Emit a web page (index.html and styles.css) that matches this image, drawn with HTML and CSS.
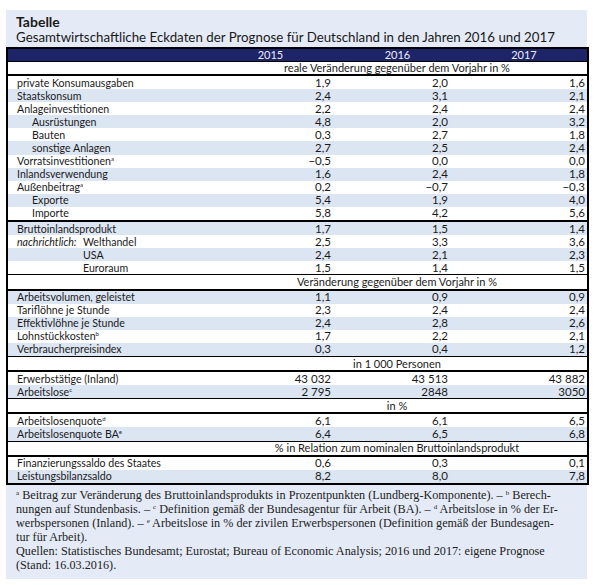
FILE: index.html
```html
<!DOCTYPE html>
<html lang="de">
<head>
<meta charset="utf-8">
<title>Tabelle</title>
<link rel="stylesheet" href="styles.css">
</head>
<body>
<div class="panel">
  <div class="cap">Tabelle</div>
  <div class="sub">Gesamtwirtschaftliche Eckdaten der Prognose für Deutschland in den Jahren 2016 und 2017</div>
  <table class="data">
    <colgroup><col class="c0"><col class="c1"><col class="c2"><col class="c3"></colgroup>
    <thead>
      <tr class="head"><th></th><th>2015</th><th>2016</th><th>2017</th></tr>
    </thead>
    <tbody>
      <tr class="sec first"><td></td><td colspan="3">reale Veränderung gegenüber dem Vorjahr in %</td></tr>
      <tr><td>private Konsumausgaben</td><td>1,9</td><td>2,0</td><td>1,6</td></tr>
      <tr class="alt"><td>Staatskonsum</td><td>2,4</td><td>3,1</td><td>2,1</td></tr>
      <tr><td>Anlageinvestitionen</td><td>2,2</td><td>2,4</td><td>2,4</td></tr>
      <tr class="alt"><td class="ind">Ausrüstungen</td><td>4,8</td><td>2,0</td><td>3,2</td></tr>
      <tr><td class="ind">Bauten</td><td>0,3</td><td>2,7</td><td>1,8</td></tr>
      <tr class="alt"><td class="ind">sonstige Anlagen</td><td>2,7</td><td>2,5</td><td>2,4</td></tr>
      <tr><td>Vorratsinvestitionen<sup>a</sup></td><td>−0,5</td><td>0,0</td><td>0,0</td></tr>
      <tr class="alt"><td>Inlandsverwendung</td><td>1,6</td><td>2,4</td><td>1,8</td></tr>
      <tr><td>Außenbeitrag<sup>a</sup></td><td>0,2</td><td>−0,7</td><td>−0,3</td></tr>
      <tr class="alt"><td class="ind">Exporte</td><td>5,4</td><td>1,9</td><td>4,0</td></tr>
      <tr><td class="ind">Importe</td><td>5,8</td><td>4,2</td><td>5,6</td></tr>
      <tr class="alt topline"><td>Bruttoinlandsprodukt</td><td>1,7</td><td>1,5</td><td>1,4</td></tr>
      <tr><td><span class="nach">nachrichtlich:</span>Welthandel</td><td>2,5</td><td>3,3</td><td>3,6</td></tr>
      <tr class="alt"><td class="far">USA</td><td>2,4</td><td>2,1</td><td>2,3</td></tr>
      <tr><td class="far">Euroraum</td><td>1,5</td><td>1,4</td><td>1,5</td></tr>
      <tr class="sec"><td></td><td colspan="3">Veränderung gegenüber dem Vorjahr in %</td></tr>
      <tr class="alt"><td>Arbeitsvolumen, geleistet</td><td>1,1</td><td>0,9</td><td>0,9</td></tr>
      <tr><td>Tariflöhne je Stunde</td><td>2,3</td><td>2,4</td><td>2,4</td></tr>
      <tr class="alt"><td>Effektivlöhne je Stunde</td><td>2,4</td><td>2,8</td><td>2,6</td></tr>
      <tr><td>Lohnstückkosten<sup>b</sup></td><td>1,7</td><td>2,2</td><td>2,1</td></tr>
      <tr class="alt"><td>Verbraucherpreisindex</td><td>0,3</td><td>0,4</td><td>1,2</td></tr>
      <tr class="sec"><td></td><td colspan="3">in 1 000 Personen</td></tr>
      <tr><td>Erwerbstätige (Inland)</td><td>43 032</td><td>43 513</td><td>43 882</td></tr>
      <tr class="alt"><td>Arbeitslose<sup>c</sup></td><td>2 795</td><td>2848</td><td>3050</td></tr>
      <tr class="sec"><td></td><td colspan="3">in %</td></tr>
      <tr><td>Arbeitslosenquote<sup>d</sup></td><td>6,1</td><td>6,1</td><td>6,5</td></tr>
      <tr class="alt"><td>Arbeitslosenquote BA<sup>e</sup></td><td>6,4</td><td>6,5</td><td>6,8</td></tr>
      <tr class="sec"><td></td><td colspan="3">% in Relation zum nominalen Bruttoinlandsprodukt</td></tr>
      <tr><td>Finanzierungssaldo des Staates</td><td>0,6</td><td>0,3</td><td>0,1</td></tr>
      <tr class="alt"><td>Leistungsbilanzsaldo</td><td>8,2</td><td>8,0</td><td>7,8</td></tr>
    </tbody>
  </table>
  <p class="notes"><sup>a</sup> Beitrag zur Veränderung des Bruttoinlandsprodukts in Prozentpunkten (Lundberg-Komponente). – <sup>b</sup> Berech-<br>nungen auf Stundenbasis. – <sup>c</sup> Definition gemäß der Bundesagentur für Arbeit (BA). – <sup>d</sup> Arbeitslose in % der Er-<br>werbspersonen (Inland). – <sup>e</sup> Arbeitslose in % der zivilen Erwerbspersonen (Definition gemäß der Bundesagen-<br>tur für Arbeit).<br>Quellen: Statistisches Bundesamt; Eurostat; Bureau of Economic Analysis; 2016 und 2017: eigene Prognose<br>(Stand: 16.03.2016).</p>
</div>
</body>
</html>
```

FILE: styles.css
```css
html, body {
  margin: 0;
  padding: 0;
  background: #ffffff;
}

.panel {
  margin: 10px 0 0 6px;
  width: 581px;
  background: #e4ebf6;
  padding: 4px 0 7px 0;
  font-family: Lato, "Liberation Sans", sans-serif;
  color: #1a1a1a;
}

.cap {
  font-weight: bold;
  font-size: 14px;
  line-height: 15px;
  padding-left: 10px;
}

.sub {
  font-size: 13.3px;
  line-height: 17px;
  padding-left: 10px;
  white-space: nowrap;
}

.data {
  width: 581px;
  border-collapse: collapse;
  table-layout: fixed;
  margin-top: 1px;
  border: 2px solid #000;
  font-size: 10.6px;
  background: #fff;
}

.c0 { width: 200px; }
.c1 { width: 127px; }
.c2 { width: 127px; }
.c3 { width: 127px; }

.data th,
.data td {
  padding: 0;
  height: 13.1px;
  line-height: 12px;
  white-space: nowrap;
}

.head th {
  background: #1e2468;
  color: #eceef6;
  font-weight: normal;
  font-size: 11px;
  text-align: center;
  height: 12px;
  border-bottom: 1px solid #000;
}

.data td:first-child {
  padding-left: 9px;
  text-align: left;
}

.data td:nth-child(2),
.data td:nth-child(3),
.data td:nth-child(4) {
  font-size: 11.5px;
}

.data td:nth-child(2) { text-align: right; padding-right: 3px; }
.data td:nth-child(3) { text-align: right; padding-right: 13px; }
.data td:nth-child(4) { text-align: right; padding-right: 2px; }

.data .sec td {
  background: #fff;
  border-top: 1px solid #000;
  border-bottom: 2px solid #000;
}

.data .sec td:nth-child(2) {
  text-align: center;
  padding-right: 0;
  font-size: 11px;
}

.data .sec.first td {
  border-top: none;
  height: 12px;
}

.data .topline td { border-top: 2px solid #000; }

.alt td { background: #dce5f2; }

.data td.ind { padding-left: 24px; }
.data td.far { padding-left: 75px; }

.nach {
  display: inline-block;
  width: 66px;
  font-style: italic;
}

sup {
  font-size: 6px;
  line-height: 0;
  vertical-align: 4px;
}

.notes {
  margin: 3px 0 0 0;
  padding-left: 10px;
  font-family: "Liberation Serif", "DejaVu Serif", serif;
  font-size: 12.2px;
  line-height: 14px;
  color: #222;
  white-space: nowrap;
}

.notes sup {
  font-size: 7px;
  vertical-align: 4px;
}
```
